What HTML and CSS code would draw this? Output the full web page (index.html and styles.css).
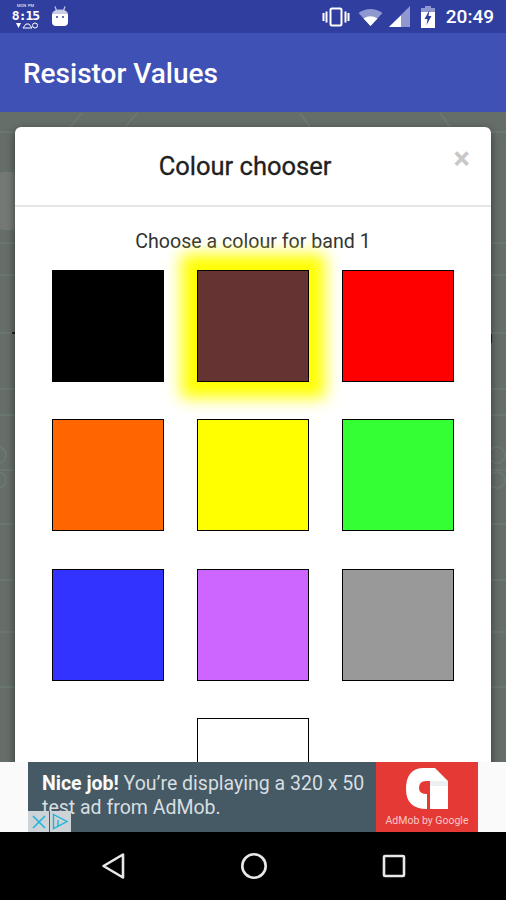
FILE: index.html
```html
<!DOCTYPE html>
<html lang="en">
<head>
  <meta charset="UTF-8" />
  <meta name="viewport" content="width=device-width, initial-scale=1.0" />
  <title>Resistor Values</title>
  <link rel="stylesheet" href="styles.css">
</head>
<body>
  <div class="status-bar">
    <div class="status-left">
      <div class="clock-widget">
        <span class="clock-tiny">MON&nbsp;&nbsp;PM</span>
        <span class="clock-digits">8:15</span>
        <svg width="24" height="7" viewBox="0 0 24 7">
          <path d="M2 1h5L4.500 6z" fill="#fff"/>
          <path d="M9 6l3-4h3l3 4z" fill="none" stroke="#fff" stroke-width="1"/>
          <circle cx="21" cy="3.500" r="2.500" fill="none" stroke="#fff" stroke-width="1"/>
        </svg>
      </div>
      <svg class="android-icon" width="18" height="21" viewBox="0 0 18 21">
        <path d="M4 0.500l1.500 4M14 0.500l-1.500 4" stroke="#ccd0e8" stroke-width="1.200"/>
        <path d="M1 9q0-5.500 8-5.500t8 5.500z" fill="#c9cde6"/>
        <path d="M1 8h16v8q0 4-4 4H5q-4 0-4-4z" fill="#fff"/>
        <circle cx="6" cy="11" r="1" fill="#303f9f"/>
        <circle cx="12" cy="11" r="1" fill="#303f9f"/>
      </svg>
    </div>
    <div class="status-right">
      <svg width="28" height="20" viewBox="0 0 28 20">
        <path d="M1.500 6v8M4.500 4.500v11M23.500 4.500v11M26.500 6v8" stroke="#fff" stroke-width="2"/>
        <rect x="8.500" y="1.500" width="11" height="17" rx="1.500" fill="#303f9f" stroke="#fff" stroke-width="2"/>
      </svg>
      <svg class="wifi" width="25" height="18" viewBox="0 0 25 18">
        <path d="M0.500 5Q12.500 -3 24.500 5L12.500 18z" fill="#8f98cf"/>
        <path d="M5.500 10.500Q12.500 6 19.500 10.500L12.500 18z" fill="#fff"/>
      </svg>
      <svg class="signal" width="21" height="22" viewBox="0 0 21 22">
        <path d="M21 0V21H0z" fill="#8f98cf"/>
        <path d="M12 9.500V21H0z" fill="#fff"/>
      </svg>
      <svg class="battery" width="14" height="22" viewBox="0 0 14 22">
        <path d="M4 0h6v2h4v6H0V2h4z" fill="#8f98cf"/>
        <path d="M0 6h14v16H0z" fill="#fff"/>
        <path d="M8.500 4L3.500 13h3l-1 6 5-9h-3z" fill="#303f9f"/>
      </svg>
      <span class="status-time">20:49</span>
    </div>
  </div>

  <header class="app-bar">Resistor Values</header>

  <main class="main-area">
    <svg class="backdrop" width="506" height="650" viewBox="0 0 506 650">
      <rect x="0" y="60" width="15" height="58" rx="3" fill="#747976"/>
      <g stroke="#6c7b72" stroke-width="1.500" fill="none">
        <path d="M0 20l506 0M0 131H506M0 163H506M0 221H506M0 277H506M0 303H506M0 358H506M0 412H506M0 468H506M0 520H506M0 575H506"/>
        <circle cx="-2" cy="343" r="8"/>
        <circle cx="-2" cy="368" r="8"/>
        <circle cx="497" cy="343" r="8"/>
        <circle cx="497" cy="368" r="8"/>
        <path d="M70 15l12-14M125 15l12-14M300 1l10 14M440 1l10 14"/>
      </g>
      <path d="M12 221h3M491 222v9" stroke="#222" stroke-width="2"/>
    </svg>

    <section class="modal">
      <div class="modal-header">
        <h2 class="modal-title">Colour chooser</h2>
        <span class="modal-close">×</span>
      </div>
      <div class="modal-body">
        <p class="modal-text">Choose a colour for band 1</p>
        <div class="swatches">
          <div class="swatch black"></div>
          <div class="swatch brown selected"></div>
          <div class="swatch red"></div>
          <div class="swatch orange"></div>
          <div class="swatch yellow"></div>
          <div class="swatch green"></div>
          <div class="swatch blue"></div>
          <div class="swatch violet"></div>
          <div class="swatch grey"></div>
          <div class="swatch blank"></div>
          <div class="swatch white"></div>
        </div>
      </div>
    </section>
  </main>

  <div class="ad-strip">
    <div class="ad-banner">
      <div class="ad-message">
        <p class="ad-text"><b>Nice job!</b> You’re displaying a 320 x 50 test ad from AdMob.</p>
        <div class="ad-controls">
          <span class="ad-control">
            <svg width="14" height="14" viewBox="0 0 14 14"><path d="M1 1l12 12M13 1L1 13" stroke="#1cb4dc" stroke-width="1.500"/></svg>
          </span>
          <span class="ad-control">
            <svg width="17" height="17" viewBox="0 0 17 17"><path d="M1.500 1.500L15 8.500 1.500 15.500z" fill="none" stroke="#1cb4dc" stroke-width="1.400"/><path d="M6 7v6.500" stroke="#1cb4dc" stroke-width="1.400"/></svg>
          </span>
        </div>
      </div>
      <div class="ad-brand">
        <svg width="42" height="41" viewBox="0 0 42 41">
          <path d="M18 0H29L42 13V41H24V13H20Q13 13 13 20Q13 26 21 26V41Q0 41 0 21Q0 0 18 0z" fill="#fff"/>
          <path d="M24 13H42V18H24z" fill="#eceff1"/>
        </svg>
        <span class="ad-brand-name">AdMob by Google</span>
      </div>
    </div>
  </div>

  <nav class="nav-bar">
    <svg width="24" height="28" viewBox="0 0 24 28"><path d="M22 2.500V25.500L2.500 14z" fill="none" stroke="#e8e8e8" stroke-width="2.600" stroke-linejoin="round"/></svg>
    <svg width="28" height="28" viewBox="0 0 28 28"><circle cx="14" cy="14" r="11.700" fill="none" stroke="#e8e8e8" stroke-width="2.600"/></svg>
    <svg width="24" height="24" viewBox="0 0 24 24"><rect x="2" y="2" width="20" height="20" rx="1" fill="none" stroke="#e8e8e8" stroke-width="2.600"/></svg>
  </nav>
</body>
</html>
```

FILE: styles.css
```css
/* Page */
* {
  box-sizing: border-box;
}
body {
  margin: 0;
  width: 506px;
  height: 900px;
  overflow: hidden;
  display: flex;
  flex-direction: column;
  font-family: Roboto, "Liberation Sans", sans-serif;
  background-color: #000;
}

/* Status bar */
.status-bar {
  height: 33px;
  flex-shrink: 0;
  display: flex;
  justify-content: space-between;
  align-items: center;
  padding: 0 12px 0 13px;
  background-color: #303f9f;
  color: #fff;
}
.status-left,
.status-right {
  display: flex;
  align-items: center;
}
.status-left {
  gap: 13px;
}
.clock-widget {
  width: 25px;
  display: flex;
  flex-direction: column;
  align-items: center;
  line-height: 1;
}
.clock-tiny {
  height: 5px;
  font-size: 4px;
  white-space: nowrap;
}
.clock-digits {
  font-family: "DejaVu Sans Mono", monospace;
  font-size: 13px;
  font-weight: bold;
  line-height: 13px;
  letter-spacing: -1px;
}
.status-right svg {
  flex-shrink: 0;
}
.wifi {
  margin-left: 8px;
}
.signal {
  margin-left: 6px;
}
.battery {
  margin-left: 11px;
}
.status-time {
  margin-left: 11px;
  font-size: 19px;
  font-weight: 500;
}

/* App bar */
.app-bar {
  height: 79px;
  flex-shrink: 0;
  display: flex;
  align-items: center;
  padding: 1px 0 0 23px;
  background-color: #3f51b5;
  color: #fff;
  font-size: 28px;
  font-weight: 500;
}

/* Dimmed page behind the dialog */
.main-area {
  position: relative;
  flex: 1;
  overflow: hidden;
  padding: 15px 15px 0;
  background-color: #666e69;
}
.backdrop {
  position: absolute;
  top: 0;
  left: 0;
}

/* Dialog */
.modal {
  position: relative;
  height: 700px;
  background-color: #fff;
  border-radius: 6px;
  box-shadow: 0 3px 9px rgba(0, 0, 0, 0.5);
}
.modal-header {
  position: relative;
  height: 80px;
  display: flex;
  align-items: center;
  justify-content: center;
  padding-right: 16px;
  border-bottom: 2px solid #e5e5e5;
}
.modal-title {
  margin: 0 0 1px;
  font-size: 25.500px;
  font-weight: 400;
  -webkit-text-stroke: 0.3px #212121;
  color: #212121;
}
.modal-close {
  position: absolute;
  top: 16px;
  right: 21px;
  font-size: 31px;
  font-weight: bold;
  line-height: 1;
  color: #c8c8c8;
}
.modal-body {
  padding: 0 37px;
}
.modal-text {
  margin: 0;
  padding-top: 24px;
  height: 63px;
  text-align: center;
  font-size: 19.600px;
  line-height: 21px;
  color: #333;
}

/* Colour swatches */
.swatches {
  display: grid;
  grid-template-columns: repeat(3, 112px);
  grid-auto-rows: 112px;
  column-gap: 33px;
  row-gap: 37.400px;
}
.swatch {
  border: 1px solid #000;
}
.swatch.selected {
  box-shadow: 0 0 15px 16px #ff0;
}
.swatch.blank {
  border: none;
}
.black { background-color: #000; }
.brown { background-color: #663333; }
.red { background-color: #ff0000; }
.orange { background-color: #ff6600; }
.yellow { background-color: #ffff00; }
.green { background-color: #33ff33; }
.blue { background-color: #3333ff; }
.violet { background-color: #cc66ff; }
.grey { background-color: #999999; }
.white { background-color: #fff; }

/* Test ad */
.ad-strip {
  position: relative;
  height: 70px;
  flex-shrink: 0;
  display: flex;
  justify-content: center;
  background-color: #fafafa;
}
.ad-banner {
  width: 450px;
  display: flex;
}
.ad-message {
  position: relative;
  width: 348px;
  padding: 10px 0 0 14px;
  overflow: hidden;
  background-color: #455a64;
}
.ad-text {
  margin: 0;
  font-size: 19.500px;
  line-height: 24px;
  color: #d8dee1;
}
.ad-text b {
  color: #fafafa;
}
.ad-controls {
  position: absolute;
  left: 0;
  bottom: 0;
  display: flex;
  gap: 1px;
}
.ad-control {
  width: 21px;
  height: 21px;
  display: flex;
  align-items: center;
  justify-content: center;
  background-color: #cdd3d6;
}
.ad-brand {
  flex: 1;
  display: flex;
  flex-direction: column;
  align-items: center;
  padding-top: 6px;
  background-color: #e53935;
}
.ad-brand-name {
  margin-top: 5px;
  font-size: 10.500px;
  white-space: nowrap;
  color: #f6c9c7;
}

/* Navigation bar */
.nav-bar {
  height: 68px;
  flex-shrink: 0;
  display: flex;
  justify-content: space-between;
  align-items: center;
  padding: 2px 100px 3px 101px;
  background-color: #000;
}
```
